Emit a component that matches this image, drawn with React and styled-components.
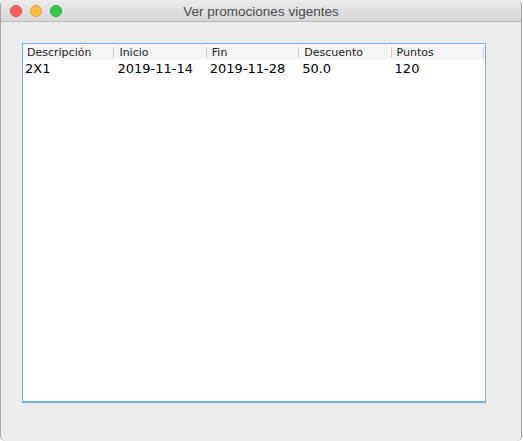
import React from 'react'
import styled, { createGlobalStyle } from 'styled-components'

const COLUMNS = ['Descripción', 'Inicio', 'Fin', 'Descuento', 'Puntos']

const ROWS = [['2X1', '2019-11-14', '2019-11-28', '50.0', '120']]

const LIGHTS = [
  { fill: '#fc605c', ring: '#de4a44' },
  { fill: '#fdbc40', ring: '#dea236' },
  { fill: '#34c84a', ring: '#27aa35' },
]

const GlobalStyle = createGlobalStyle`
  html, body {
    margin: 0;
    background: #ffffff;
  }
`

const Window = styled.div`
  width: 522px;
  height: 441px;
  box-sizing: border-box;
  display: flex;
  flex-direction: column;
  background: #ececec;
  border-left: 1px solid #a8a8a8;
  border-right: 1px solid #a8a8a8;
  border-radius: 5px;
  overflow: hidden;
`

const TitleBar = styled.div`
  height: 21px;
  flex: none;
  display: grid;
  grid-template-columns: 80px 1fr 80px;
  align-items: center;
  background: linear-gradient(#ebebeb, #d6d6d6);
  border-bottom: 1px solid #b9b9b9;
`

const Lights = styled.div`
  display: flex;
  gap: 8px;
  padding-left: 9px;
  padding-top: 1px;
`

const Light = styled.span`
  width: 12px;
  height: 12px;
  box-sizing: border-box;
  border-radius: 50%;
  background: ${(p) => p.$fill};
  border: 0.5px solid ${(p) => p.$ring};
`

const Title = styled.div`
  text-align: center;
  font-family: 'Liberation Sans', Arial, sans-serif;
  font-size: 13.5px;
  color: #4a4a4a;
  padding-top: 1px;
`

const Content = styled.div`
  flex: 1;
  display: flex;
  flex-direction: column;
  padding: 21px 35px 38px 21px;
`

const TableBox = styled.div`
  flex: 1;
  background: #ffffff;
  border: 1px solid #6eaef0;
  border-bottom-width: 2px;
`

const HeaderRow = styled.div`
  display: grid;
  grid-template-columns: repeat(5, 1fr);
  height: 16px;
  background: #f5f5f5;
`

const HeaderCell = styled.div`
  display: flex;
  align-items: center;
  padding-left: 4px;
  font-family: 'DejaVu Sans', Verdana, sans-serif;
  font-size: 11px;
  color: #1c1c1c;
`

const HeaderLabel = styled.span`
  flex: 1;
`

const Divider = styled.span`
  width: 1px;
  height: 11px;
  margin-right: 1px;
  background: #cdcdcd;
`

const Row = styled.div`
  display: grid;
  grid-template-columns: repeat(5, 1fr);
  height: 17px;
  align-items: center;
`

const Cell = styled.div`
  padding-left: 2px;
  font-family: 'DejaVu Sans', Verdana, sans-serif;
  font-size: 13px;
  color: #000000;
  white-space: nowrap;
`

export default function App() {
  return (
    <>
      <GlobalStyle />
      <Window>
        <TitleBar>
          <Lights>
            {LIGHTS.map((l, i) => (
              <Light key={i} $fill={l.fill} $ring={l.ring} />
            ))}
          </Lights>
          <Title>Ver promociones vigentes</Title>
          <span />
        </TitleBar>
        <Content>
          <TableBox>
            <HeaderRow>
              {COLUMNS.map((c) => (
                <HeaderCell key={c}>
                  <HeaderLabel>{c}</HeaderLabel>
                  <Divider />
                </HeaderCell>
              ))}
            </HeaderRow>
            {ROWS.map((r, i) => (
              <Row key={i}>
                {r.map((v, j) => (
                  <Cell key={j}>{v}</Cell>
                ))}
              </Row>
            ))}
          </TableBox>
        </Content>
      </Window>
    </>
  )
}
